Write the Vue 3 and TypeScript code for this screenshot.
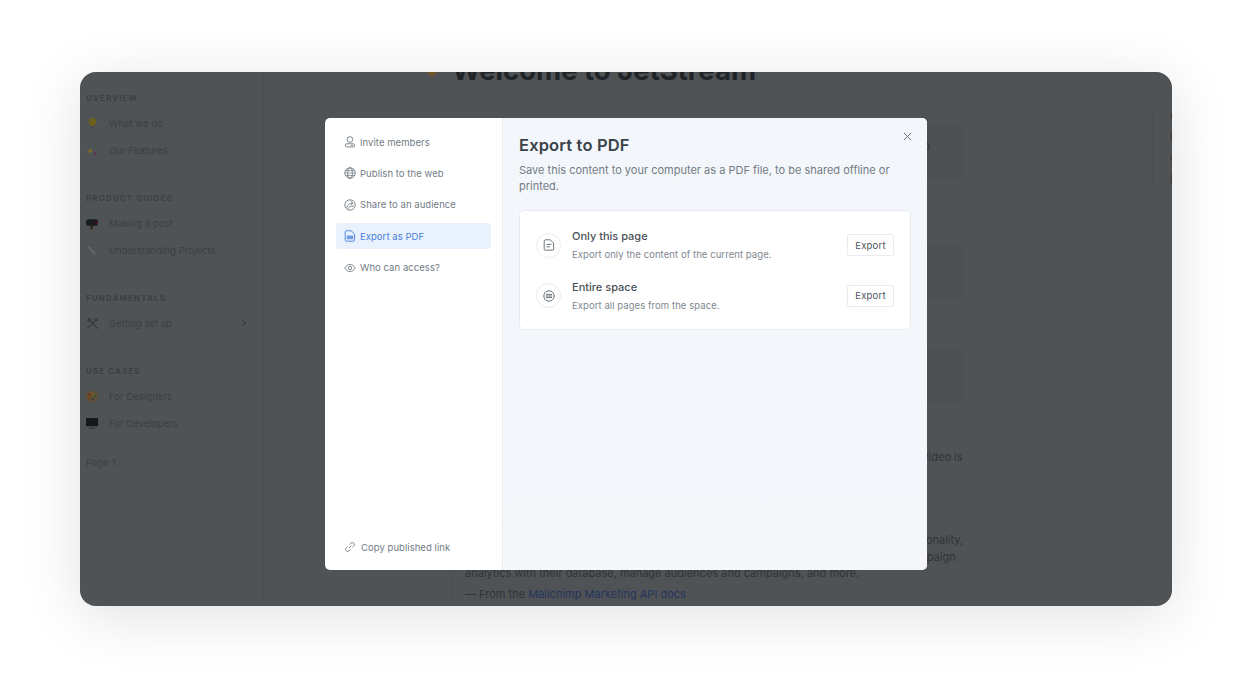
<script setup lang="ts">
interface NavItem { label: string; icon: string; arrow?: boolean }
interface NavGroup { title: string; items: NavItem[] }

const groups: NavGroup[] = [
  { title: 'Overview', items: [{ label: 'What we do', icon: 'bulb' }, { label: 'Our Features', icon: 'sparkle' }] },
  { title: 'Product guides', items: [{ label: 'Making a post', icon: 'mailbox' }, { label: 'Understanding Projects', icon: 'clip' }] },
  { title: 'Fundamentals', items: [{ label: 'Getting set up', icon: 'tools', arrow: true }] },
  { title: 'Use cases', items: [{ label: 'For Designers', icon: 'palette' }, { label: 'For Developers', icon: 'screen' }] }
]

const menu = [
  { label: 'Invite members', icon: 'invite' },
  { label: 'Publish to the web', icon: 'globe' },
  { label: 'Share to an audience', icon: 'share' },
  { label: 'Export as PDF', icon: 'pdf', active: true },
  { label: 'Who can access?', icon: 'eye' }
]

const options = [
  { title: 'Only this page', text: 'Export only the content of the current page.', icon: 'doc' },
  { title: 'Entire space', text: 'Export all pages from the space.', icon: 'space' }
]
</script>

<template>
  <div class="stage">
    <div class="window">
      <div class="page">
        <aside class="sidebar">
          <section v-for="g in groups" :key="g.title" class="group">
            <h6>{{ g.title }}</h6>
            <div v-for="it in g.items" :key="it.label" class="nav-item">
              <svg class="emoji" viewBox="0 0 14 14">
                <template v-if="it.icon === 'bulb'">
                  <path d="M7 .5a4.300 4.300 0 0 0-2.600 7.700c.6.500.8 1.100.8 1.800h3.600c0-.7.2-1.300.8-1.800A4.300 4.300 0 0 0 7 .5z" fill="#d8c040" />
                  <rect x="5.500" y="10.300" width="3" height="2.200" fill="#8a8f93" />
                </template>
                <template v-else-if="it.icon === 'sparkle'">
                  <path d="M4.500 4l1 2.500L8 7.500 5.500 8.500l-1 2.500-1-2.500L1 7.500l2.500-1z" fill="#ffd24a" />
                  <path d="M10 8.500l.6 1.400 1.400.6-1.400.6-.6 1.400-.6-1.400-1.400-.6 1.400-.6z" fill="#e8489a" />
                  <path d="M10.500 1.500l.4 1 1 .4-1 .4-.4 1-.4-1-1-.4 1-.4z" fill="#7fc060" />
                </template>
                <template v-else-if="it.icon === 'mailbox'">
                  <rect x="0" y="2.500" width="13" height="7" rx="2.500" fill="#33383c" />
                  <rect x="9.500" y="5.500" width="3.500" height="1.400" fill="#c02840" />
                  <rect x="5" y="9.500" width="2.200" height="3.500" fill="#5a3a20" />
                </template>
                <template v-else-if="it.icon === 'clip'">
                  <path d="M3 3.500l6.500 7" stroke="#c8ced2" stroke-width="2.200" stroke-linecap="round" />
                </template>
                <template v-else-if="it.icon === 'tools'">
                  <path d="M1.500 12.500L10.500 3.500M3 2.500l9.500 10" stroke="#6a7076" stroke-width="1.300" />
                  <path d="M.8 3.500L3.500 .8l2 2L2.800 5.500z" fill="#6a7076" />
                  <path d="M9 2.500l3-1.500 1 2.800-2.500 1z" fill="#6a7076" />
                </template>
                <template v-else-if="it.icon === 'palette'">
                  <ellipse cx="6.500" cy="7" rx="6.500" ry="5.800" fill="#c9a060" />
                  <circle cx="3.800" cy="5" r="1.200" fill="#e83a3a" />
                  <circle cx="7.500" cy="3.800" r="1.100" fill="#f0d040" />
                  <circle cx="10.300" cy="6.800" r="1.100" fill="#40b060" />
                  <circle cx="7.300" cy="10" r="1.100" fill="#4070d0" />
                  <circle cx="3.800" cy="8.600" r="1" fill="#e06820" />
                </template>
                <template v-else>
                  <rect x="0" y="1" width="13" height="9" rx=".6" fill="#2c3034" />
                  <rect x="3.500" y="11.500" width="6" height="1" fill="#555a5f" />
                </template>
              </svg>
              <span>{{ it.label }}</span>
              <svg v-if="it.arrow" class="chevron" viewBox="0 0 8 8"><path d="M2.500 1l3 3-3 3" fill="none" stroke="currentColor" stroke-width="1" /></svg>
            </div>
          </section>
          <div class="page-one">Page 1</div>
        </aside>

        <main class="content">
          <div class="title-row">
            <svg class="title-icon" viewBox="0 0 18 18">
              <path d="M9 0l9 9-9 9-9-9z" fill="#e0b048" />
              <path d="M2 7l3 3-3 1z" fill="#9fc0c0" />
            </svg>
            <h1>Welcome to JetStream</h1>
          </div>
          <div class="box box-one">Here is a short note that sits in the first callout block and goes on to</div>
          <div class="box box-two"></div>
          <div class="box box-three"></div>
          <p class="para">This short guide walks you through everything you'll find in this space and how, and the video is</p>
          <blockquote>
            Mailchimp's Marketing API provides programmatic access to Mailchimp's data and functionality,<br />
            allowing developers to build helpful features to do things like sync email activity and campaign<br />
            analytics with their database, manage audiences and campaigns, and more.
            <div class="quote-from">— From the <a>Mailchimp Marketing API docs</a></div>
          </blockquote>
        </main>

        <nav class="toc">
          <span>Overview</span>
          <span>Features</span>
          <span>Guides</span>
          <span>Docs</span>
        </nav>
      </div>

      <div class="overlay">
        <div class="modal">
          <div class="modal-side">
            <div class="menu">
              <div v-for="m in menu" :key="m.label" class="menu-item" :class="{ active: m.active }">
                <svg class="ico" viewBox="0 0 12 12" fill="none" stroke="currentColor" stroke-width=".9">
                  <template v-if="m.icon === 'invite'">
                    <circle cx="6" cy="3.500" r="2.800" />
                    <path d="M2.500 7.800h7a1 1 0 0 1 1 1v1.100a1 1 0 0 1-1 1h-7a1 1 0 0 1-1-1V8.800a1 1 0 0 1 1-1z" />
                    <path d="M7 9.400h2.200" />
                  </template>
                  <template v-else-if="m.icon === 'globe'">
                    <circle cx="6" cy="6" r="5.200" />
                    <ellipse cx="6" cy="6" rx="2.300" ry="5.200" />
                    <path d="M.8 6h10.400M1.500 3.500h9M1.500 8.500h9" stroke-width=".7" />
                  </template>
                  <template v-else-if="m.icon === 'share'">
                    <circle cx="6" cy="6" r="5.200" />
                    <path d="M2.800 8.700C3.300 6 5.300 4.300 8.500 4M6.800 2.300L8.800 4 7.200 6M4.200 9.800C4.600 8 6.200 6.900 9.700 7" />
                  </template>
                  <template v-else-if="m.icon === 'pdf'">
                    <path d="M2.500.8h4.700L10.600 4v5.900a1.300 1.300 0 0 1-1.300 1.300H2.500a1.300 1.300 0 0 1-1.300-1.300V2.100A1.300 1.300 0 0 1 2.500.8z" />
                    <path d="M2.800 5.500h6.400v3.800H2.800z" fill="currentColor" stroke="none" opacity=".75" />
                  </template>
                  <template v-else>
                    <path d="M.8 6c1.300-2.300 3.100-3.500 5.200-3.500s3.900 1.200 5.200 3.500c-1.300 2.300-3.100 3.500-5.200 3.500S2.100 8.300.8 6z" />
                    <circle cx="6" cy="6" r="1.700" />
                  </template>
                </svg>
                <span>{{ m.label }}</span>
              </div>
            </div>
            <div class="menu-item copy">
              <svg class="ico" viewBox="0 0 12 12" fill="none" stroke="currentColor" stroke-width=".9" stroke-linecap="round">
                <path d="M5 7l2-2M5.800 3.200l1-1a2.100 2.100 0 0 1 3 3l-1 1M6.200 8.800l-1 1a2.100 2.100 0 0 1-3-3l1-1" />
              </svg>
              <span>Copy published link</span>
            </div>
          </div>

          <div class="modal-main">
            <button class="close" aria-label="Close">
              <svg viewBox="0 0 10 10" fill="none" stroke="currentColor" stroke-width="1"><path d="M1 1l8 8M9 1L1 9" /></svg>
            </button>
            <h2>Export to PDF</h2>
            <p class="lead">Save this content to your computer as a PDF file, to be shared offline or printed.</p>
            <div class="card">
              <div v-for="o in options" :key="o.title" class="option">
                <span class="option-icon">
                  <svg viewBox="0 0 12 12" fill="none" stroke="currentColor" stroke-width=".9">
                    <template v-if="o.icon === 'doc'">
                      <path d="M2.500.8h4.700L10.600 4v5.900a1.300 1.300 0 0 1-1.300 1.300H2.500a1.300 1.300 0 0 1-1.300-1.300V2.100A1.300 1.300 0 0 1 2.500.8z" />
                      <path d="M3.500 5.400h5M3.500 7.800h3.400" />
                    </template>
                    <template v-else>
                      <circle cx="6" cy="6" r="5.200" />
                      <path d="M3 4.400h6M2.600 6h6.800M3 7.600h6" />
                    </template>
                  </svg>
                </span>
                <div class="option-text">
                  <strong>{{ o.title }}</strong>
                  <small>{{ o.text }}</small>
                </div>
                <button class="export">Export</button>
              </div>
            </div>
          </div>
        </div>
      </div>
    </div>
  </div>
</template>

<style>
html, body { background: #fff; }
</style>

<style scoped>
.stage {
  width: 100%;
  height: 694px;
  padding: 72px 80px 88px;
  box-sizing: border-box;
  font-family: Inter, "Liberation Sans", sans-serif;
  background: #fff;
  overflow: hidden;
}
.window {
  position: relative;
  height: 534px;
  border-radius: 16px;
  overflow: hidden;
  background: #9ea6ac;
  box-shadow: 0 10px 60px rgba(0, 0, 0, 0.12);
}
.page {
  display: flex;
  height: 100%;
}
.sidebar {
  width: 184px;
  flex: none;
  box-sizing: border-box;
  padding: 20px 6px 0;
  border-right: 1px solid #989fa5;
}
.group { margin-bottom: 28.5px; }
.group h6 {
  margin: 0 0 5.5px;
  font-size: 8px;
  line-height: 12px;
  font-weight: 700;
  letter-spacing: 1.1px;
  text-transform: uppercase;
  color: #787f85;
}
.nav-item {
  display: flex;
  align-items: center;
  height: 27px;
  font-size: 9.500px;
  letter-spacing: .05px;
  color: #787f85;
}
.emoji { width: 13px; height: 13px; margin-right: 10px; flex: none; }
.chevron { width: 8px; height: 8px; margin-left: auto; margin-right: 9px; color: #60676c; }
.page-one {
  margin-top: -9px;
  font-size: 9.500px;
  line-height: 14px;
  letter-spacing: .05px;
  color: #787f85;
}
.content {
  width: 512px;
  margin-left: 188px;
  flex: none;
}
.title-row {
  position: relative;
  height: 32px;
  margin-top: -18px;
}
.title-icon {
  position: absolute;
  left: -29px;
  top: 5px;
  width: 18px;
  height: 18px;
}
h1 {
  margin: 0;
  font-size: 27.500px;
  line-height: 32px;
  font-weight: 700;
  color: #42484e;
  white-space: nowrap;
}
.box {
  box-sizing: border-box;
  background: #9ba3a9;
  border: 1px solid #969ea4;
}
.box-one {
  height: 52px;
  margin-top: 39px;
  padding: 13px 33px 0 0;
  text-align: right;
  white-space: nowrap;
  font-size: 11px;
  color: #646a70;
}
.box-two { height: 55px; margin-top: 68px; }
.box-three { height: 54px; margin-top: 48px; }
.para {
  margin: 47px 0 0;
  padding-left: 12px;
  font-size: 11px;
  line-height: 17px;
  white-space: nowrap;
  color: #646a70;
}
blockquote {
  margin: 66px 0 0;
  padding: 0 0 0 12px;
  border-left: 1px solid #969ea4;
  font-size: 11px;
  line-height: 16.500px;
  white-space: nowrap;
  color: #646a70;
}
.quote-from { margin-top: 4.500px; }
.quote-from a { color: #4a6ab8; }
.toc {
  display: flex;
  flex-direction: column;
  gap: 8px;
  height: 75px;
  margin: 38px 0 0 188px;
  padding: 0 0 0 17px;
  border-left: 1px solid #989fa5;
  font-size: 10px;
  line-height: 13px;
  color: #646a70;
  box-sizing: border-box;
}
.overlay {
  position: absolute;
  inset: 0;
  padding-top: 10px;
  display: flex;
  align-items: center;
  justify-content: center;
  background: rgba(0, 0, 0, 0.5);
}
.modal {
  display: flex;
  width: 602px;
  height: 452px;
  border-radius: 5px;
  overflow: hidden;
  background: #fff;
}
.modal-side {
  width: 178px;
  flex: none;
  box-sizing: border-box;
  padding: 11px 11px 10px;
  border-right: 1px solid #e9edf2;
  display: flex;
  flex-direction: column;
  justify-content: space-between;
}
.menu { display: flex; flex-direction: column; gap: 5.400px; }
.menu-item {
  display: flex;
  align-items: center;
  gap: 4px;
  height: 26px;
  padding-left: 8px;
  border-radius: 3px;
  font-size: 9.500px;
  letter-spacing: .05px;
  color: #727c85;
}
.menu-item.active {
  background: #e9f1fd;
  color: #4a7fdc;
}
.copy { gap: 5px; }
.ico { width: 12px; height: 12px; flex: none; }
.modal-main {
  position: relative;
  flex: 1;
  box-sizing: border-box;
  padding: 17px 16px 0;
  background: linear-gradient(#f3f6fa 85%, #f5f7f9);
}
.close {
  position: absolute;
  top: 14px;
  right: 15px;
  width: 9px;
  height: 9px;
  padding: 0;
  border: 0;
  background: none;
  color: #5d666e;
  display: flex;
}
.close svg { width: 9px; height: 9px; }
h2 {
  margin: 0;
  font-size: 16.500px;
  line-height: 21px;
  font-weight: 600;
  letter-spacing: .15px;
  color: #3a424a;
}
.lead {
  margin: 6px 0 0;
  font-size: 11px;
  line-height: 16px;
  color: #727c85;
}
.card {
  margin-top: 16px;
  height: 120px;
  box-sizing: border-box;
  padding: 9px 16px;
  background: #fff;
  border: 1px solid #e8ecf1;
  border-radius: 5px;
}
.option {
  display: flex;
  align-items: center;
  height: 50.500px;
}
.option-icon {
  width: 25px;
  height: 25px;
  flex: none;
  box-sizing: border-box;
  border: 1px solid #e8ecf1;
  border-radius: 50%;
  display: flex;
  align-items: center;
  justify-content: center;
  color: #59636c;
}
.option-icon svg { width: 12px; height: 12px; }
.option-text {
  flex: 1;
  margin-left: 11px;
  display: flex;
  flex-direction: column;
  gap: 5px;
}
.option-text strong {
  font-size: 11px;
  line-height: 14px;
  font-weight: 500;
  color: #4a5259;
}
.option-text small {
  font-size: 9.500px;
  line-height: 13px;
  letter-spacing: .07px;
  color: #7d8790;
}
.export {
  width: 47px;
  height: 22px;
  padding: 0;
  font-family: inherit;
  font-size: 9.500px;
  letter-spacing: .2px;
  color: #4b535a;
  background: #fff;
  border: 1px solid #e8ecf1;
  border-radius: 2px;
}
</style>
